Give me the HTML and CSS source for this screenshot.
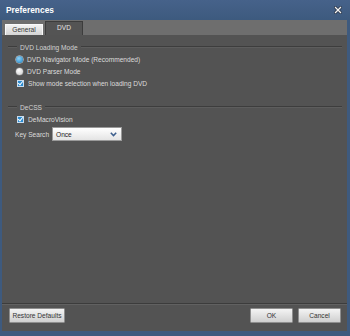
FILE: index.html
```html
<!DOCTYPE html>
<html lang="en">

<head>
  <meta charset="UTF-8">
  <title>Preferences</title>
  <link rel="stylesheet" href="styles.css">
</head>

<body>
  <div class="window">
    <div class="titlebar">
      <span class="title">Preferences</span>
      <svg class="close" width="8" height="8" viewBox="0 0 8 8">
        <path d="M1.5 1.5 L6.5 6.5 M6.5 1.5 L1.5 6.5" stroke="#2a3648" stroke-width="2.8" stroke-linecap="square"/>
        <path d="M1.5 1.5 L6.5 6.5 M6.5 1.5 L1.5 6.5" stroke="#f4f4f4" stroke-width="1.3" stroke-linecap="square"/>
      </svg>
    </div>

    <div class="tabs">
      <div class="tab">General</div>
      <div class="tab active">DVD</div>
    </div>

    <div class="panel">
      <div class="group-head">
        <span class="rule short"></span>
        <span class="group-title">DVD Loading Mode</span>
        <span class="rule"></span>
      </div>
      <div class="row"><span class="radio checked"></span>DVD Navigator Mode (Recommended)</div>
      <div class="row"><span class="radio"></span>DVD Parser Mode</div>
      <div class="row"><span class="check"></span>Show mode selection when loading DVD</div>

      <div class="group-head second">
        <span class="rule short"></span>
        <span class="group-title">DeCSS</span>
        <span class="rule"></span>
      </div>
      <div class="row"><span class="check"></span>DeMacroVision</div>
      <div class="row key">
        <span class="key-label">Key Search</span>
        <div class="select">
          <span>Once</span>
          <svg width="7" height="5" viewBox="0 0 7 5">
            <path d="M0.8 0.8 L3.5 3.6 L6.2 0.8" fill="none" stroke="#3d5f8e" stroke-width="1.5"/>
          </svg>
        </div>
      </div>
    </div>

    <div class="footer">
      <button class="button wide">Restore Defaults</button>
      <div class="right">
        <button class="button">OK</button>
        <button class="button">Cancel</button>
      </div>
    </div>
  </div>
</body>

</html>
```

FILE: styles.css
```css
body {
  margin: 0;
  font-family: "Liberation Sans", Arial, sans-serif;
  font-size: 6.6px;
  color: #dcdcdc;
  white-space: nowrap;
}

.window {
  width: 350px;
  height: 336px;
  display: flex;
  flex-direction: column;
  background: #3e5a7e;
  box-sizing: border-box;
  padding: 0 3px 5px 2px;
}

.titlebar {
  height: 20px;
  display: flex;
  align-items: center;
  justify-content: space-between;
  padding: 0 8px 0 6px;
  background: linear-gradient(#46628a, #3d5a7e);
  margin: 0 -3px 0 -2px;
}

.title {
  font-weight: bold;
  font-size: 8.4px;
  color: #ffffff;
}

.close {
  margin-top: -1px;
}

.tabs {
  height: 15px;
  background: #6e6e6e;
  display: flex;
  align-items: flex-end;
  padding-left: 3px;
  gap: 2px;
}

.tab {
  height: 11px;
  width: 38px;
  box-sizing: border-box;
  text-align: center;
  line-height: 10px;
  color: #333333;
  background: linear-gradient(#f2f2f2, #d4d4d4);
  border: 1px solid #fafafa;
  border-bottom: none;
}

.tab.active {
  height: 14px;
  line-height: 12px;
  color: #e6e6e6;
  background: #545454;
  border: 1px solid #3c3c3c;
  border-bottom: none;
}

.panel {
  flex: 1;
  background: #535353;
  padding: 6px 5px 0 6px;
}

.group-head {
  display: flex;
  align-items: center;
  height: 12px;
  gap: 2px;
}

.group-head.second {
  margin-top: 12px;
}

.rule {
  flex: 1;
  height: 0;
  border-top: 1px solid #3d3d3d;
  border-bottom: 1px solid #5d5d5d;
}

.rule.short {
  flex: 0 0 9px;
}

.group-title {
  color: #d2d2d2;
  padding: 0 1px;
}

.row {
  height: 12px;
  display: flex;
  align-items: center;
  padding-left: 8px;
}

.radio {
  width: 7px;
  height: 7px;
  border-radius: 50%;
  margin-right: 4px;
  background: radial-gradient(circle at 40% 35%, #ffffff, #c8c8c8);
  box-shadow: 0 0 0 0.5px #8a8a8a;
}

.radio.checked {
  background: radial-gradient(circle at 40% 35%, #8fd0f5, #1e86c8);
  box-shadow: 0 0 0 0.5px #dddddd;
}

.check {
  width: 5px;
  height: 5px;
  margin: 0 4px 0 1px;
  background: #2b8bd0;
  border: 1px solid #c8dcee;
  position: relative;
}

.check::after {
  content: "";
  position: absolute;
  left: 1px;
  top: -1px;
  width: 2px;
  height: 4px;
  border-right: 1px solid #ffffff;
  border-bottom: 1px solid #ffffff;
  transform: rotate(40deg);
}

.row.key {
  height: 14px;
  margin-top: 2px;
  padding-left: 7px;
}

.key-label {
  width: 37px;
}

.select {
  width: 70px;
  height: 14px;
  box-sizing: border-box;
  display: flex;
  align-items: center;
  justify-content: space-between;
  padding: 0 4px 0 3px;
  color: #222222;
  background: linear-gradient(#ffffff, #e4e4e4);
  border: 1px solid #9a9a9a;
}

.footer {
  height: 28px;
  background: #535353;
  border-top: 1px solid #3c3c3c;
  box-shadow: inset 0 1px 0 #616161;
  box-sizing: border-box;
  display: flex;
  justify-content: space-between;
  align-items: flex-start;
  padding: 4px 6px 0 7px;
}

.right {
  display: flex;
  gap: 5px;
}

.button {
  width: 43px;
  height: 15px;
  padding: 0;
  font-family: "Liberation Sans", Arial, sans-serif;
  font-size: 6.6px;
  color: #333333;
  background: linear-gradient(#f4f4f4, #cfcfcf);
  border: 1px solid #8e8e8e;
  border-radius: 1px;
  white-space: nowrap;
}

.button.wide {
  width: 56px;
}
```
